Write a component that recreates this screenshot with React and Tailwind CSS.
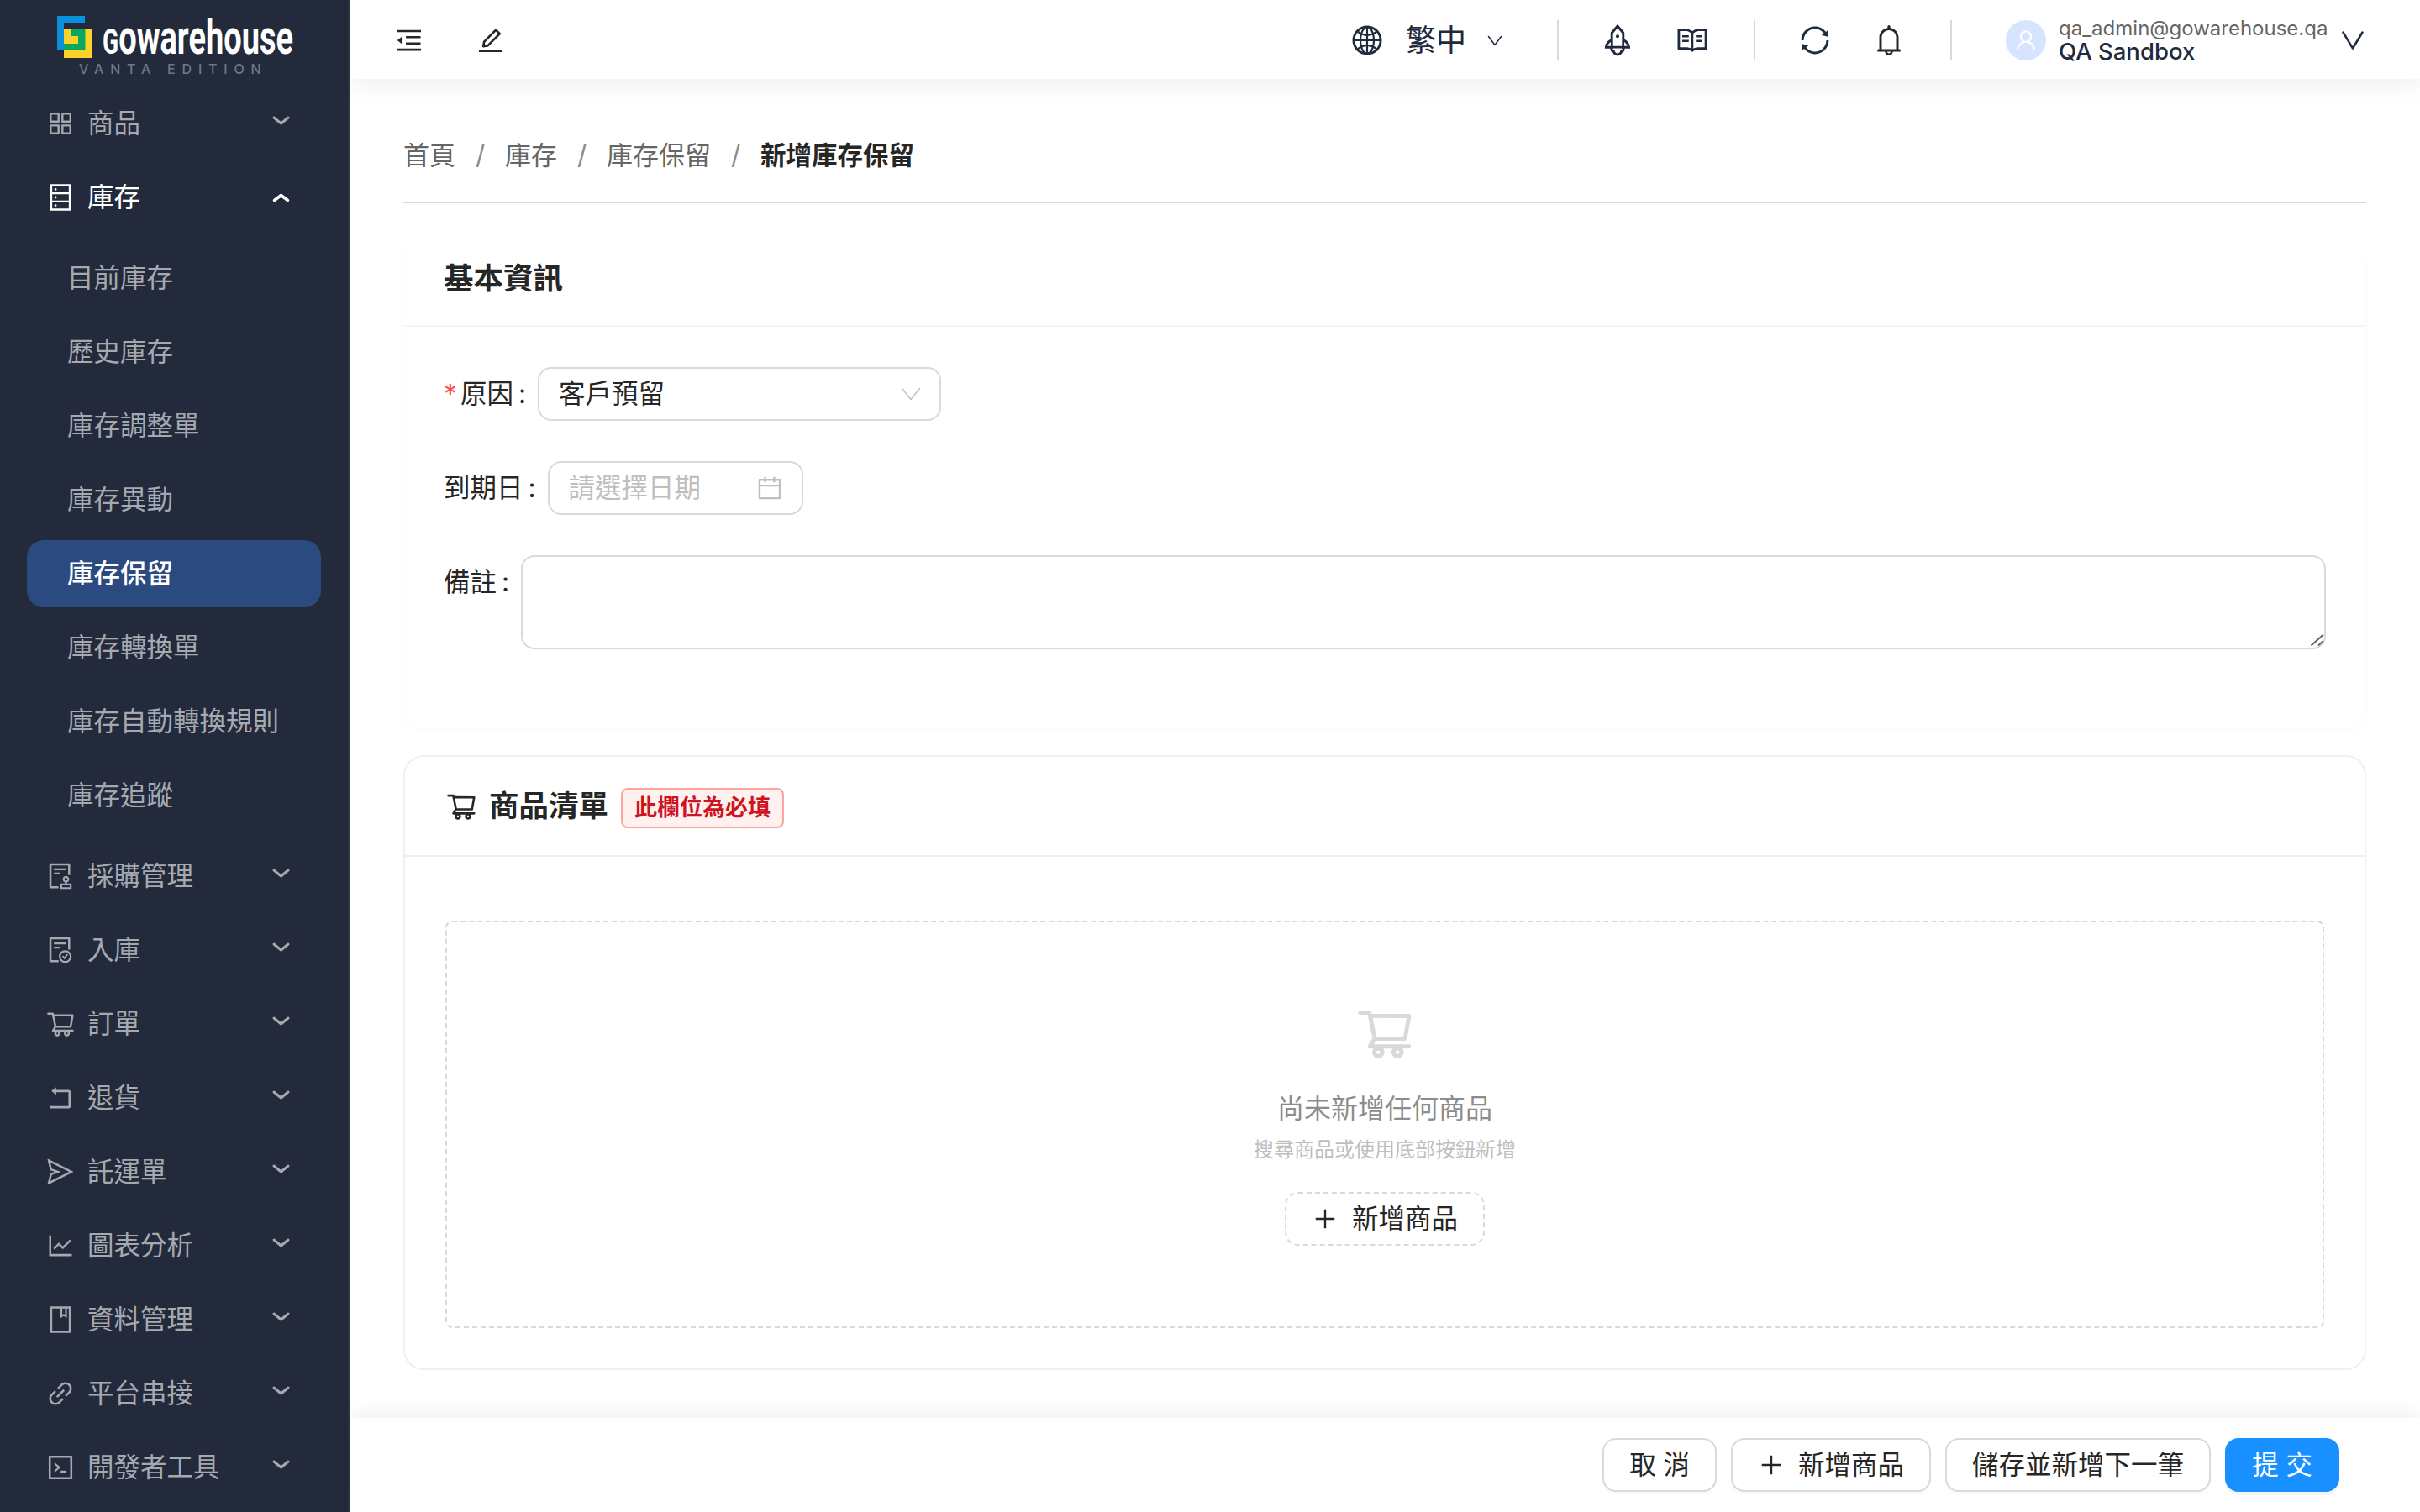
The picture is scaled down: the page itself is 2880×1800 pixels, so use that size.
import {
  AiOutlineAppstore,
  AiOutlineAudit,
  AiOutlineBell,
  AiOutlineBook,
  AiOutlineCalendar,
  AiOutlineCode,
  AiOutlineDatabase,
  AiOutlineEdit,
  AiOutlineFileDone,
  AiOutlineGlobal,
  AiOutlineLineChart,
  AiOutlineLink,
  AiOutlineMenuFold,
  AiOutlinePlus,
  AiOutlineRead,
  AiOutlineRocket,
  AiOutlineRollback,
  AiOutlineSend,
  AiOutlineShoppingCart,
  AiOutlineSync,
  AiOutlineUser,
} from 'react-icons/ai';

const topBefore = [{ label: '商品', icon: AiOutlineAppstore }];
const subItems = ['目前庫存', '歷史庫存', '庫存調整單', '庫存異動', '庫存保留', '庫存轉換單', '庫存自動轉換規則', '庫存追蹤'];
const topAfter = [
  { label: '採購管理', icon: AiOutlineAudit },
  { label: '入庫', icon: AiOutlineFileDone },
  { label: '訂單', icon: AiOutlineShoppingCart },
  { label: '退貨', icon: AiOutlineRollback },
  { label: '託運單', icon: AiOutlineSend },
  { label: '圖表分析', icon: AiOutlineLineChart },
  { label: '資料管理', icon: AiOutlineBook },
  { label: '平台串接', icon: AiOutlineLink },
  { label: '開發者工具', icon: AiOutlineCode },
];

function Chevron({ width, height, stroke = 2, up = false, className = '' }) {
  const m = stroke;
  const points = up
    ? `${m},${height - m} ${width / 2},${m} ${width - m},${height - m}`
    : `${m},${m} ${width / 2},${height - m} ${width - m},${m}`;
  return (
    <svg width={width} height={height} viewBox={`0 0 ${width} ${height}`} fill="none" className={className}>
      <polyline points={points} stroke="currentColor" strokeWidth={stroke} strokeLinecap="round" strokeLinejoin="round" />
    </svg>
  );
}

function Logo() {
  return (
    <div className="relative h-[107px] shrink-0">
      <div className="flex pl-[68px] pt-[19px]">
        <svg width="41" height="50" viewBox="0 0 41 50" className="shrink-0">
          <polygon points="8,16 41,16 41,50 8,50" fill="#fdd22b" />
          <polygon points="17,16 33.5,16 33.5,41 8,41 8,33 25,33 25,24 17,24" fill="#0aa85c" />
          <polygon points="0,0 33,0 33,8 8,8 8,41 0,41" fill="#0a8fdc" />
        </svg>
        <div className="ml-[13px] mt-[-2px] h-[54px] origin-left scale-x-[0.655] whitespace-nowrap font-['Roboto',sans-serif] text-[58px] leading-[54px] font-bold text-white first-letter:text-[43px]">
          Gowarehouse
        </div>
      </div>
      <div className="absolute top-[74px] left-[94px] text-[16px] leading-[16px] font-medium tracking-[7.8px] whitespace-nowrap text-[#6b788c]">
        VANTA EDITION
      </div>
    </div>
  );
}

function TopItem({ label, icon: Icon, open = false }) {
  return (
    <div className={`mb-[8px] flex h-[80px] items-center pr-[68px] pl-[54px] text-[31.5px] ${open ? 'text-white' : 'text-[#a6a9b0]'}`}>
      <Icon size={36} className="shrink-0" />
      <span className="ml-[14px] flex-1 whitespace-nowrap">{label}</span>
      {open ? (
        <Chevron width={23} height={13} stroke={3.5} up />
      ) : (
        <Chevron width={23} height={13} stroke={3} className="mb-[8px]" />
      )}
    </div>
  );
}

function Sidebar() {
  return (
    <aside className="flex h-full w-[416px] shrink-0 flex-col overflow-hidden border-r-2 border-[#2c3347] bg-[#232a3b]">
      <Logo />
      {topBefore.map((item) => (
        <TopItem key={item.label} {...item} />
      ))}
      <TopItem label="庫存" icon={AiOutlineDatabase} open />
      <div className="mt-[8px] mb-[8px]">
        {subItems.map((label) => (
          <div
            key={label}
            className={`mx-[32px] mb-[8px] flex h-[80px] items-center rounded-[20px] pl-[48px] text-[31.5px] whitespace-nowrap ${
              label === '庫存保留' ? 'bg-[#2b4a7f] font-medium text-white' : 'text-[#a6a9b0]'
            }`}
          >
            {label}
          </div>
        ))}
      </div>
      {topAfter.map((item) => (
        <TopItem key={item.label} {...item} />
      ))}
    </aside>
  );
}

function Header() {
  return (
    <header className="relative z-10 flex h-[94px] shrink-0 items-center bg-white pt-[2px] pl-[53px] shadow-[0_4px_32px_rgba(0,0,0,0.08)]">
      <AiOutlineMenuFold size={36} className="text-[#262626]" />
      <AiOutlineEdit size={36} className="ml-[61px] text-[#262626]" />
      <div className="ml-auto flex items-center pr-[66px] text-[#1f2a3d]">
        <AiOutlineGlobal size={40} />
        <span className="ml-[26px] text-[36px] leading-[48px]">繁中</span>
        <Chevron width={18} height={13} stroke={1.5} className="ml-[25px]" />
        <div className="ml-[65px] h-[48px] w-[2px] bg-[#d9d9d9]" />
        <AiOutlineRocket size={44} className="ml-[48px]" />
        <AiOutlineRead size={40} className="ml-[47px]" />
        <div className="ml-[53px] h-[48px] w-[2px] bg-[#d9d9d9]" />
        <AiOutlineSync size={40} className="ml-[51px]" />
        <AiOutlineBell size={42} className="ml-[47px] text-[#262626]" />
        <div className="ml-[52px] h-[48px] w-[2px] bg-[#d9d9d9]" />
        <div className="ml-[64px] flex size-[48px] items-center justify-center rounded-full bg-[#d6e4ff] text-white">
          <AiOutlineUser size={30} />
        </div>
        <div className="ml-[15px] w-[320px] font-['Inter',sans-serif]">
          <div className="text-[24px] leading-[26px] text-[#666666]">qa_admin@gowarehouse.qa</div>
          <div className="text-[27.5px] leading-[28px] font-medium text-[#1f2a3d]">QA Sandbox</div>
        </div>
        <Chevron width={28} height={24} stroke={2.5} className="ml-[16px]" />
      </div>
    </header>
  );
}

function Breadcrumb() {
  const parts = ['首頁', '庫存', '庫存保留'];
  return (
    <nav className="flex h-[148px] items-center border-b-2 border-[#d9d9d9] pt-[64px] pb-[29px] text-[31px] leading-[48px]">
      {parts.map((part) => (
        <span key={part} className="flex items-center text-[#666666]">
          {part}
          <span className="w-[59px] text-center text-[#8c8c8c]">/</span>
        </span>
      ))}
      <span className="text-[30.5px] font-semibold text-[#262626]">新增庫存保留</span>
    </nav>
  );
}

function FormLabel({ children, required = false }) {
  return (
    <label className="flex h-[64px] shrink-0 items-center text-[31.5px] text-[#262626]">
      {required && <span className="w-[20px] text-[#ff4d4f]">*</span>}
      {children}
      <span className="w-[29px] pl-[6px]">:</span>
    </label>
  );
}

function BasicInfo() {
  return (
    <section className="mt-[46px] rounded-[24px] bg-white shadow-[0_2px_10px_rgba(0,0,0,0.025)]">
      <div className="flex h-[101px] items-center border-b-2 border-[#f5f5f5] px-[48px] pb-[12px]">
        <h2 className="text-[35.5px] font-semibold text-[#262626]">基本資訊</h2>
      </div>
      <div className="px-[48px] pt-[48px] pb-[94px]">
        <div className="mb-[48px] flex">
          <FormLabel required>原因</FormLabel>
          <div className="flex h-[64px] w-[480px] items-center justify-between rounded-[16px] border-2 border-[#d9d9d9] bg-white pr-[22px] pl-[23px] text-[31.5px] text-[#262626]">
            客戶預留
            <Chevron width={24} height={16} stroke={1.5} className="text-[#bfbfbf]" />
          </div>
        </div>
        <div className="mb-[48px] flex">
          <FormLabel>到期日</FormLabel>
          <div className="flex h-[64px] w-[304px] items-center justify-between rounded-[16px] border-2 border-[#d9d9d9] bg-white pr-[21px] pl-[23px] text-[31.5px] text-[#bfbfbf]">
            請選擇日期
            <AiOutlineCalendar size={34} />
          </div>
        </div>
        <div className="flex">
          <FormLabel>備註</FormLabel>
          <div className="relative flex-1">
            <textarea className="block h-[112px] w-full resize-none rounded-[16px] border-2 border-[#d9d9d9] bg-white" />
            <svg width="16" height="14" viewBox="0 0 16 14" className="absolute right-[2px] bottom-[4px] text-[#666666]">
              <path d="M0.5 13.5 L15 0.5 M9 13.5 L15 8" stroke="currentColor" strokeWidth="2" fill="none" />
            </svg>
          </div>
        </div>
      </div>
    </section>
  );
}

function ProductList() {
  return (
    <section className="mt-[32px] rounded-[24px] border-2 border-[#f0f0f0] bg-white">
      <div className="flex h-[119px] items-center border-b-2 border-[#f0f0f0] px-[48px]">
        <AiOutlineShoppingCart size={38} className="text-[#262626]" />
        <h2 className="ml-[14px] text-[35.5px] font-semibold text-[#262626]">商品清單</h2>
        <span className="mt-[5px] ml-[15px] flex h-[48px] items-center rounded-[8px] border-2 border-[#ffa39e] bg-[#fff1f0] px-[14px] text-[27px] font-semibold text-[#cf1322]">
          此欄位為必填
        </span>
      </div>
      <div className="px-[48px] pt-[76px] pb-[48px]">
        <div className="flex h-[485px] flex-col items-center rounded-[8px] border-2 border-dashed border-[#d9d9d9] pt-[96px]">
          <AiOutlineShoppingCart size={72} className="text-[#d9d9d9]" />
          <p className="mt-[30px] text-[32px] leading-[48px] text-[#8c8c8c]">尚未新增任何商品</p>
          <p className="mt-[7px] text-[24px] leading-[36px] text-[#bfbfbf]">搜尋商品或使用底部按鈕新增</p>
          <button className="mt-[32px] flex h-[64px] items-center rounded-[16px] border-2 border-dashed border-[#d9d9d9] bg-white px-[30px] text-[31.5px] text-[#262626]">
            <AiOutlinePlus size={32} />
            <span className="ml-[16px]">新增商品</span>
          </button>
        </div>
      </div>
    </section>
  );
}

function Footer() {
  const outline = 'flex h-[64px] items-center rounded-[16px] border-2 border-[#d9d9d9] bg-white px-[30px] text-[31.5px] text-[#262626] shadow-[0_4px_0_rgba(0,0,0,0.02)]';
  return (
    <footer className="relative z-10 flex h-[112px] shrink-0 items-center justify-end gap-[17px] bg-white pr-[96px] shadow-[0_-4px_24px_rgba(0,0,0,0.07)]">
      <button className={outline}>取 消</button>
      <button className={outline}>
        <AiOutlinePlus size={32} />
        <span className="ml-[16px]">新增商品</span>
      </button>
      <button className={outline}>儲存並新增下一筆</button>
      <button className="flex h-[64px] items-center rounded-[16px] border-2 border-[#1890ff] bg-[#1890ff] px-[30px] text-[31.5px] text-white shadow-[0_4px_0_rgba(0,0,0,0.04)]">
        提 交
      </button>
    </footer>
  );
}

export default function App() {
  return (
    <div className="flex h-[1800px] w-[2880px] overflow-hidden bg-white font-['Inter','Noto_Sans_CJK_TC',sans-serif]">
      <Sidebar />
      <main className="flex min-w-0 flex-1 flex-col">
        <Header />
        <div className="flex-1 overflow-hidden px-[64px]">
          <Breadcrumb />
          <BasicInfo />
          <ProductList />
        </div>
        <Footer />
      </main>
    </div>
  );
}
